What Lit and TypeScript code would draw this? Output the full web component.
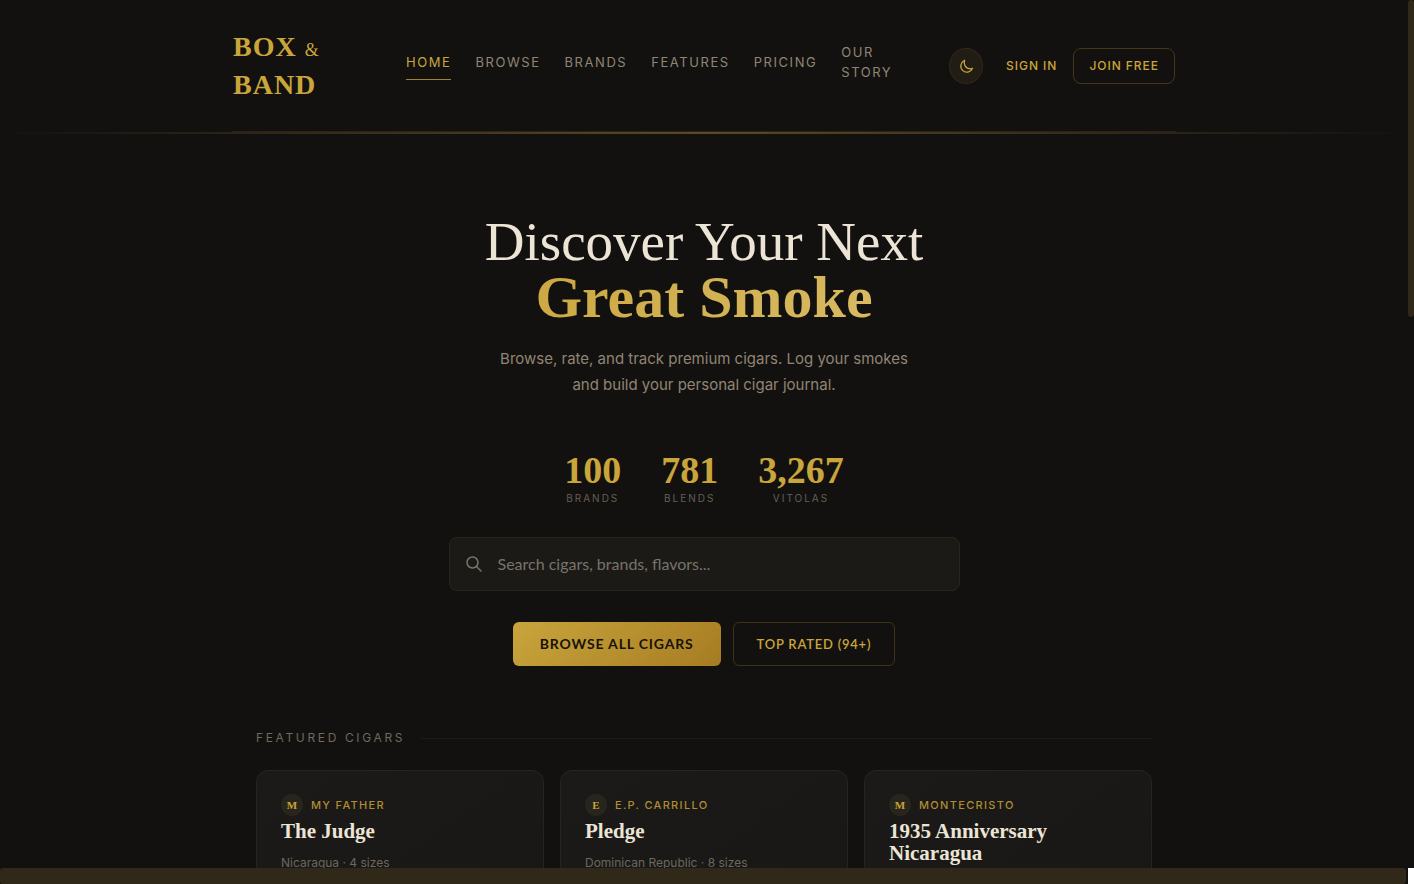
import { LitElement, html, css } from "lit";
import { customElement, property } from "lit/decorators.js";

interface Cigar {
  brand: string;
  name: string;
  origin: string;
  sizes: number;
}

const NAV = ["Home", "Browse", "Brands", "Features", "Pricing", "Our Story"];

const STATS = [
  { value: "100", label: "Brands" },
  { value: "781", label: "Blends" },
  { value: "3,267", label: "Vitolas" },
];

const CIGARS: Cigar[] = [
  { brand: "My Father", name: "The Judge", origin: "Nicaragua", sizes: 4 },
  { brand: "E.P. Carrillo", name: "Pledge", origin: "Dominican Republic", sizes: 8 },
  { brand: "Montecristo", name: "1935 Anniversary Nicaragua", origin: "Nicaragua", sizes: 4 },
];

@customElement("cigar-card")
export class CigarCard extends LitElement {
  @property({ attribute: false }) cigar!: Cigar;

  static styles = css`
    :host {
      display: block;
      box-sizing: border-box;
      min-height: 180px;
      padding: 23px 24px;
      border: 1px solid #26241d;
      border-radius: 12px;
      background: linear-gradient(145deg, #1b1a18, #181715);
    }
    .brand {
      display: flex;
      align-items: center;
      gap: 8px;
      color: #b08d32;
      font-size: 11px;
      font-weight: 500;
      line-height: 22px;
      letter-spacing: 0.12em;
      text-transform: uppercase;
    }
    .badge {
      width: 22px;
      height: 22px;
      border-radius: 50%;
      background: #28251d;
      color: #c9a53c;
      font: bold 11px/22px "Liberation Serif", serif;
      letter-spacing: 0;
      text-align: center;
    }
    .name {
      margin: 4px 0 12px;
      color: #ece5d6;
      font: bold 21px/22px "Liberation Serif", serif;
    }
    .meta {
      margin: 0;
      color: #6d675d;
      font-size: 12px;
      line-height: 18px;
    }
  `;

  render() {
    const { brand, name, origin, sizes } = this.cigar;
    return html`
      <div class="brand"><span class="badge">${brand[0]}</span>${brand}</div>
      <h3 class="name">${name}</h3>
      <p class="meta">${origin} · ${sizes} sizes</p>
    `;
  }
}

@customElement("app-root")
export class AppRoot extends LitElement {
  static styles = css`
    :host {
      display: grid;
      grid-template: minmax(0, 1fr) 16px / minmax(0, 1fr) 6px;
      height: 100vh;
      background: #13110f;
      color: #ece5d6;
      font-family: Inter, sans-serif;
    }
    a {
      color: inherit;
      text-decoration: none;
    }
    button,
    input {
      font: inherit;
      cursor: pointer;
    }
    .page {
      overflow: hidden;
    }
    .track-y {
      display: flex;
      flex-direction: column;
    }
    .thumb-y {
      height: 36.5%;
      border-radius: 3px;
      background: #302818;
    }
    .track-x {
      display: flex;
      padding-right: 2px;
    }
    .thumb-x {
      flex: 1;
      border-radius: 3px;
      background: #302818;
    }
    .corner {
      background: #fff;
    }

    .header {
      padding-bottom: 2px;
      background: linear-gradient(90deg, transparent, #5c4a26 50%, transparent) bottom / 100% 2px
        no-repeat;
    }
    .bar {
      display: flex;
      align-items: center;
      box-sizing: border-box;
      max-width: 944px;
      margin: 0 auto;
      padding: 28px 1px 27px;
      border-bottom: 1px solid #2a2417;
    }
    .logo {
      flex: 0 0 125px;
      margin-right: 48px;
      color: #c9a53c;
      font: bold 28px/38px "Liberation Serif", serif;
      letter-spacing: 1px;
    }
    .amp {
      font-size: 18px;
      font-weight: 400;
      line-height: 1;
    }
    .nav {
      display: flex;
      align-items: center;
      gap: 24px;
      color: #8f8574;
      font-size: 13px;
      line-height: 20px;
      letter-spacing: 0.12em;
      text-transform: uppercase;
    }
    .nav-link {
      width: min-content;
      padding-bottom: 7px;
      border-bottom: 1px solid transparent;
    }
    .nav-link.current {
      border-color: #a5832c;
      color: #c9a53c;
    }
    .actions {
      display: flex;
      align-items: center;
      gap: 16px;
      margin-left: auto;
      color: #c9a53c;
      font-size: 12px;
      font-weight: 500;
      line-height: 18px;
      letter-spacing: 0.08em;
      white-space: nowrap;
    }
    .theme {
      display: grid;
      place-items: center;
      width: 34px;
      height: 36px;
      margin-right: 7px;
      padding: 0;
      border: 1px solid #30291a;
      border-radius: 50%;
      background: #211d14;
      color: #c9a53c;
    }
    .join {
      padding: 8px 15px;
      border: 1px solid #453719;
      border-radius: 8px;
    }

    .hero {
      display: flex;
      flex-direction: column;
      align-items: center;
      padding: 80px 24px 64px;
      text-align: center;
    }
    .title {
      margin: 0;
      font: 400 55px/56px "Liberation Serif", serif;
    }
    .title-strong {
      display: block;
      background: linear-gradient(135deg, #c9a53c, #dbbd68);
      background-clip: text;
      color: transparent;
      font-size: 60px;
      font-weight: 700;
      line-height: 54px;
    }
    .lead {
      max-width: 420px;
      margin: 22px 0 0;
      color: #8f8574;
      font-size: 15px;
      line-height: 26px;
    }
    .stats {
      display: flex;
      gap: 40px;
      margin: 52px 0 0;
    }
    .stat {
      display: flex;
      flex-direction: column-reverse;
    }
    .stat-value {
      margin: 0;
      color: #c9a53c;
      font: bold 38px/40px "Liberation Serif", serif;
    }
    .stat-label {
      color: #655f55;
      font-size: 10px;
      line-height: 16px;
      letter-spacing: 2px;
      text-transform: uppercase;
    }
    .search {
      display: flex;
      align-items: center;
      gap: 16px;
      box-sizing: border-box;
      width: 100%;
      max-width: 511px;
      height: 54px;
      margin-top: 31px;
      padding: 0 16px;
      border: 1px solid #2a261b;
      border-radius: 8px;
      background: #1b1a17;
      color: #79736a;
    }
    .search-input {
      flex: 1;
      min-width: 0;
      padding: 0;
      border: 0;
      outline: 0;
      background: none;
      color: #ece5d6;
      font: 16px/24px Lato, sans-serif;
      cursor: text;
    }
    .search-input::placeholder {
      color: #79736a;
      opacity: 1;
    }
    .cta {
      display: flex;
      flex-wrap: wrap;
      justify-content: center;
      gap: 12px;
      margin-top: 31px;
      line-height: 20px;
      text-transform: uppercase;
      font-family: Lato, sans-serif;
    }
    .primary {
      padding: 12px 27px;
      border-radius: 6px;
      background: linear-gradient(135deg, #c9a53c, #a67c22);
      color: #17120a;
      font-size: 14px;
      font-weight: 700;
      letter-spacing: 0.06em;
    }
    .secondary {
      padding: 11px 23px;
      border: 1px solid #3d3119;
      border-radius: 6px;
      color: #c9a53c;
      font-size: 13px;
      font-weight: 600;
      letter-spacing: 0.06em;
    }

    .featured {
      max-width: 896px;
      margin: 0 auto;
      padding: 0 24px 48px;
    }
    .heading {
      display: flex;
      align-items: center;
      gap: 16px;
      margin: 0 0 24px;
      color: #6f695e;
      font-size: 12px;
      font-weight: 400;
      line-height: 16px;
      letter-spacing: 0.22em;
      text-transform: uppercase;
    }
    .heading::after {
      content: "";
      flex: 1;
      height: 1px;
      background: #1d1b16;
    }
    .cards {
      display: grid;
      grid-template-columns: repeat(3, minmax(0, 1fr));
      gap: 16px;
    }
  `;

  render() {
    return html`
      <div class="page">
        <header class="header">
          <div class="bar">
            <a class="logo" href="#">BOX <span class="amp">&amp;</span> BAND</a>
            <nav class="nav" aria-label="Main">
              ${NAV.map(
                (label, i) =>
                  html`<a class="nav-link ${i === 0 ? "current" : ""}" href="#">${label}</a>`
              )}
            </nav>
            <div class="actions">
              <button class="theme" aria-label="Toggle theme">
                <svg width="15" height="15" viewBox="0 0 24 24" fill="none" stroke="currentColor"
                  stroke-width="2" stroke-linecap="round" stroke-linejoin="round">
                  <path d="M21.7 15A9.7 9.7 0 0 1 18 15.8 9.75 9.75 0 0 1 9 2.3 9.75 9.75 0 1 0 21.7 15Z" />
                </svg>
              </button>
              <a href="#">SIGN IN</a>
              <a class="join" href="#">JOIN FREE</a>
            </div>
          </div>
        </header>

        <main>
          <section class="hero">
            <h1 class="title">Discover Your Next <span class="title-strong">Great Smoke</span></h1>
            <p class="lead">
              Browse, rate, and track premium cigars. Log your smokes and build your personal cigar
              journal.
            </p>
            <dl class="stats">
              ${STATS.map(
                (s) => html`<div class="stat">
                  <dt class="stat-label">${s.label}</dt>
                  <dd class="stat-value">${s.value}</dd>
                </div>`
              )}
            </dl>
            <label class="search">
              <svg width="16" height="16" viewBox="0 0 16 16" fill="none" stroke="currentColor"
                stroke-width="1.5" stroke-linecap="round" aria-hidden="true">
                <circle cx="6.5" cy="6.5" r="5.5" />
                <path d="M10.5 10.5 15 15" />
              </svg>
              <input class="search-input" type="search" aria-label="Search cigars"
                placeholder="Search cigars, brands, flavors..." />
            </label>
            <div class="cta">
              <a class="primary" href="#">Browse all cigars</a>
              <a class="secondary" href="#">Top rated (94+)</a>
            </div>
          </section>

          <section class="featured">
            <h2 class="heading">Featured cigars</h2>
            <div class="cards">
              ${CIGARS.map((c) => html`<cigar-card .cigar=${c}></cigar-card>`)}
            </div>
          </section>
        </main>
      </div>
      <div class="track-y"><div class="thumb-y"></div></div>
      <div class="track-x"><div class="thumb-x"></div></div>
      <div class="corner"></div>
    `;
  }
}
